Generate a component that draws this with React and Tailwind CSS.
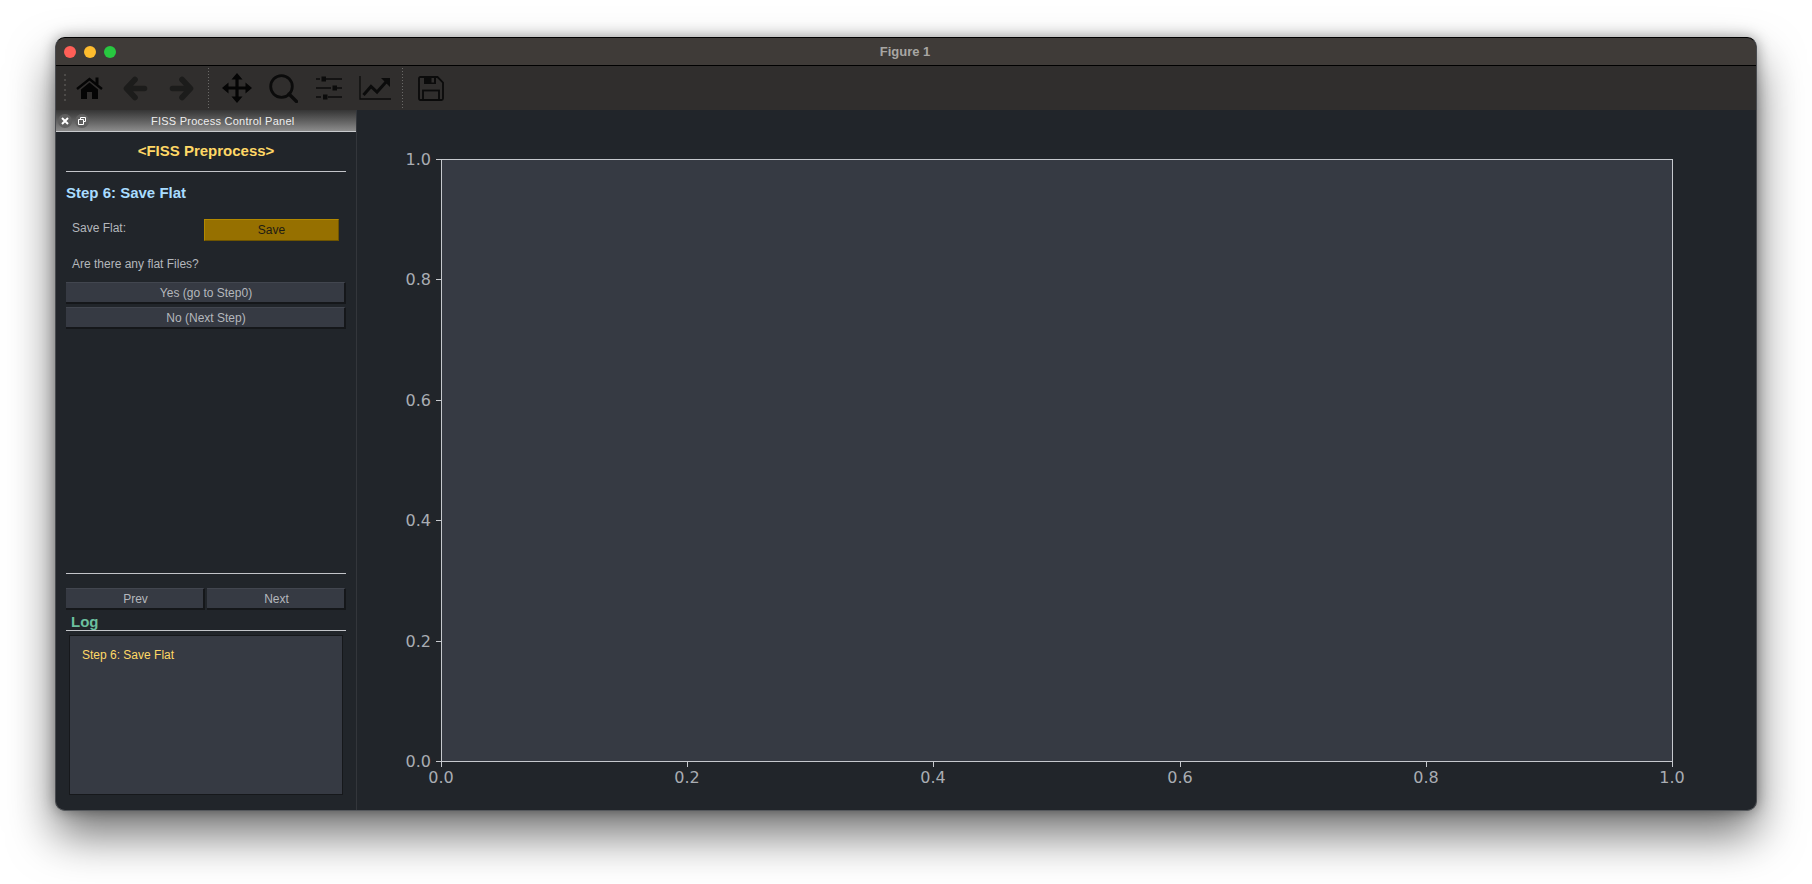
const UI = "font-['Liberation_Sans',Arial,sans-serif]";
const PANEL_BTN =
  "flex items-center justify-center pl-[2px] pt-[1px] bg-[#363a43] border-t border-[#42464f] border-r-2 border-b-2 border-r-[#15171a] border-b-[#15171a] text-[12px] text-[#b4b7bc]";

function HomeIcon() {
  return (
    <svg width="27" height="22" viewBox="0 0 27 22" fill="#050505">
      <path d="M1 12L13.5 2L26 12" fill="none" stroke="#050505" strokeWidth="2.4" />
      <rect x="19.5" y="0.5" width="3" height="7" />
      <path d="M5 12.5L13.5 5.5L22 12.5V22H16V15H11V22H5Z" />
    </svg>
  );
}

function ArrowIcon({ flip = false }) {
  return (
    <svg width="25" height="25" viewBox="0 0 25 25" fill="none" stroke="#1c1c1b" strokeWidth="5.6" strokeLinecap="round" strokeLinejoin="round" className={flip ? "-scale-x-100" : ""}>
      <path d="M12 3.5L3.5 12.5L12 21.5M4 12.5H21.5" />
    </svg>
  );
}

function MoveIcon() {
  return (
    <svg width="30" height="30" viewBox="0 0 30 30" fill="#050505">
      <path d="M15 3V27M3 15H27" stroke="#050505" strokeWidth="3.2" />
      <path d="M15 0L20.5 6.5H9.5ZM15 30L20.5 23.5H9.5ZM0 15L6.5 9.5V20.5ZM30 15L23.5 9.5V20.5Z" />
    </svg>
  );
}

function ZoomIcon() {
  return (
    <svg width="29" height="29" viewBox="0 0 29 29" fill="none" stroke="#0b0b0b">
      <circle cx="12.5" cy="12.5" r="10.8" strokeWidth="2.8" />
      <path d="M20 20 L27.5 27.5" strokeWidth="3.2" strokeLinecap="round" />
    </svg>
  );
}

function SlidersIcon() {
  return (
    <svg width="27" height="24" viewBox="0 0 27 24" fill="#0b0b0b" stroke="#0b0b0b">
      <path d="M0 3H4M10 3H26M0 12H15M21 12H26M0 21H5M12 21H26" strokeWidth="1.3" fill="none" />
      <rect x="5.5" y="0.5" width="4.5" height="5" stroke="none" />
      <rect x="16.5" y="9.5" width="4.5" height="5" stroke="none" />
      <rect x="7" y="18.5" width="4.5" height="5" stroke="none" />
    </svg>
  );
}

function LineIcon() {
  return (
    <svg width="32" height="24" viewBox="0 0 32 24" fill="none" stroke="#0b0b0b">
      <path d="M1 0V23H32" strokeWidth="1.3" />
      <path d="M4.5 19L12 10.5L18 16L27 6" strokeWidth="3" />
      <path d="M22 2H31V11Z" fill="#0b0b0b" stroke="none" />
    </svg>
  );
}

function SaveIcon() {
  return (
    <svg width="26" height="25" viewBox="0 0 26 25" fill="none" stroke="#0b0b0b" strokeWidth="1.8">
      <path d="M2.5 1H19.5L25 6.5V22.5Q25 24 23.5 24H2.5Q1 24 1 22.5V2.5Q1 1 2.5 1Z" />
      <rect x="5" y="14.5" width="16" height="9.5" />
      <rect x="6" y="1" width="12" height="7" fill="#0b0b0b" stroke="none" />
      <rect x="13.5" y="2" width="2.5" height="4.5" fill="#302e2d" stroke="none" />
    </svg>
  );
}

function ToolButton({ children }) {
  return <div className="flex w-[46px] items-center justify-center">{children}</div>;
}

function ToolSep() {
  return (
    <div className="my-[2px] ml-[4px] mr-[5px] w-px bg-[repeating-linear-gradient(to_bottom,#6a6967_0,#6a6967_1px,transparent_1px,transparent_3px)]" />
  );
}

function Toolbar() {
  return (
    <div className="flex h-[44px] shrink-0 bg-[#302e2d] pl-[8px]">
      <div className="my-[8px] w-[2px] bg-[repeating-linear-gradient(to_bottom,#4c4a48_0,#4c4a48_2px,transparent_2px,transparent_5px)]" />
      <ToolButton>
        <HomeIcon />
      </ToolButton>
      <ToolButton>
        <ArrowIcon />
      </ToolButton>
      <ToolButton>
        <ArrowIcon flip />
      </ToolButton>
      <ToolSep />
      <ToolButton>
        <MoveIcon />
      </ToolButton>
      <ToolButton>
        <ZoomIcon />
      </ToolButton>
      <ToolButton>
        <SlidersIcon />
      </ToolButton>
      <ToolButton>
        <LineIcon />
      </ToolButton>
      <ToolSep />
      <ToolButton>
        <SaveIcon />
      </ToolButton>
    </div>
  );
}

function DockTitle() {
  return (
    <div className="flex h-[22px] shrink-0 items-center border-b border-[#c9cbce] bg-gradient-to-b from-[#353535] to-[#8c8c8c] pl-[2px]">
      <span className="flex h-[14px] w-[14px] items-center justify-center rounded-full bg-[#5f5f5f]">
        <svg width="8" height="8" viewBox="0 0 8 8" stroke="#fff" strokeWidth="2">
          <path d="M1 1L7 7M7 1L1 7" />
        </svg>
      </span>
      <span className="ml-[3px] flex h-[14px] w-[14px] items-center justify-center rounded-full bg-[#5f5f5f]">
        <svg width="8" height="8" viewBox="0 0 8 8" fill="none" stroke="#fff" strokeWidth="1">
          <path d="M2.5 2V.5H7.5V4.5H6M.5 2.5H5.5V7.5H.5Z" />
        </svg>
      </span>
      <span className="ml-[62px] pt-[1px] text-[11px] tracking-[0.25px] text-[#eeeeee]">FISS Process Control Panel</span>
    </div>
  );
}

function ControlPanel() {
  return (
    <aside className="flex w-[301px] shrink-0 flex-col border-r border-[#33363b]">
      <DockTitle />
      <div className="flex flex-1 flex-col px-[10px] pb-[15px]">
        <h1 className="mt-[10px] text-center text-[15px] font-bold leading-[18px] text-[#ffd866]">
          &lt;FISS Preprocess&gt;
        </h1>
        <div className="mt-[11px] h-px bg-[#c3c5c9]" />
        <h2 className="mt-[12px] text-[15px] font-bold leading-[18px] text-[#a9dcff]">Step 6: Save Flat</h2>
        <div className="mt-[17px] flex items-center pl-[6px] pr-[7px]">
          <span className="mb-[4px] w-[132px] text-[12px] leading-[18px] text-[#b4b7bc]">Save Flat:</span>
          <button className="h-[22px] flex-1 border border-[#b38900] border-r-[#6e5400] border-b-[#6e5400] bg-[#967000] text-[12px] text-[#1f1c14]">
            Save
          </button>
        </div>
        <p className="mt-[14px] pl-[6px] text-[12px] leading-[18px] text-[#b4b7bc]">Are there any flat Files?</p>
        <div className={`mt-[9px] h-[22px] ${PANEL_BTN}`}>Yes (go to Step0)</div>
        <div className={`mt-[3px] h-[22px] ${PANEL_BTN}`}>No (Next Step)</div>
        <div className="flex-1" />
        <div className="h-px bg-[#c3c5c9]" />
        <div className="mt-[14px] flex gap-[2px]">
          <div className={`h-[22px] w-[139px] ${PANEL_BTN}`}>Prev</div>
          <div className={`h-[22px] flex-1 ${PANEL_BTN}`}>Next</div>
        </div>
        <div className="flex h-[20px] items-end pl-[5px] text-[15px] font-bold leading-[16px] text-[#6cbf9e]">Log</div>
        <div className="h-px bg-[#c3c5c9]" />
        <div className="mx-[3px] mt-[4px] h-[160px] border border-[#16181b] bg-[#363a43] pl-[12px] pt-[10px] text-[12px] leading-[18px] text-[#ffd866]">
          Step 6: Save Flat
        </div>
      </div>
    </aside>
  );
}

// axes box inside the canvas, in canvas coordinates
const AX = { left: 84, right: 1315, top: 49, bottom: 651 };
const TICKS = [0, 0.2, 0.4, 0.6, 0.8, 1];
const TICK_COLOR = "#a9adb3";

function Plot() {
  const w = AX.right - AX.left;
  const h = AX.bottom - AX.top;
  return (
    <svg className="block h-[700px] w-[1399px]" viewBox="0 0 1399 700">
      <rect x={AX.left + 0.5} y={AX.top + 0.5} width={w} height={h} fill="#363a43" stroke="#c6c9ce" strokeWidth="1" />
      {TICKS.map((t) => {
        const x = AX.left + 0.5 + Math.round(w * t);
        const y = AX.bottom + 0.5 - Math.round(h * t);
        return (
          <g key={t} fontFamily="'DejaVu Sans', sans-serif" fontSize="16" fill={TICK_COLOR}>
            <path d={`M${x} ${AX.bottom}V${AX.bottom + 6}`} stroke="#c6c9ce" />
            <path d={`M${AX.left - 5} ${y}H${AX.left}`} stroke="#c6c9ce" />
            <text x={x - 0.5} y={AX.bottom + 22} textAnchor="middle">
              {t.toFixed(1)}
            </text>
            <text x={AX.left - 10} y={y + 5.5} textAnchor="end">
              {t.toFixed(1)}
            </text>
          </g>
        );
      })}
    </svg>
  );
}

export default function App() {
  return (
    <div className={`h-[884px] w-[1812px] overflow-hidden bg-white pl-[55px] pt-[37px] ${UI}`}>
      <div className="flex h-[774px] w-[1702px] flex-col overflow-hidden rounded-[10px] border border-black border-b-[#55585c] border-x-[#4a4c50] bg-[#21252a] shadow-[0_24px_46px_rgba(0,0,0,0.55),0_0_14px_rgba(0,0,0,0.35)]">
        <div className="relative flex h-[28px] shrink-0 items-center justify-center border-b border-black bg-[#3f3b38] pr-[2px]">
          <div className="absolute left-[8px] top-[8px] flex gap-[8px]">
            <span className="h-[12px] w-[12px] rounded-full bg-[#ff5f57]" />
            <span className="h-[12px] w-[12px] rounded-full bg-[#febc2e]" />
            <span className="h-[12px] w-[12px] rounded-full bg-[#28c840]" />
          </div>
          <span className="text-[13px] font-bold text-[#a8a6a3]">Figure 1</span>
        </div>
        <Toolbar />
        <div className="flex min-h-0 flex-1">
          <ControlPanel />
          <main className="min-w-0 flex-1">
            <Plot />
          </main>
        </div>
      </div>
    </div>
  );
}
